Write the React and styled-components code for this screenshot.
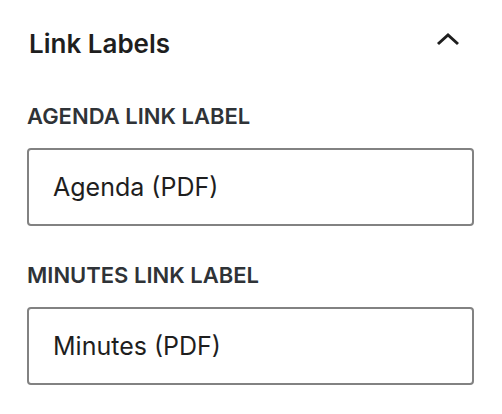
import styled, { createGlobalStyle } from "styled-components";

const Global = createGlobalStyle`
  body {
    margin: 0;
    background: #fff;
    font-family: Inter, "Noto Sans", sans-serif;
  }
`;

const Panel = styled.div`
  width: 502px;
  padding: 28px 28px 0 27px;
  box-sizing: border-box;
`;

const Header = styled.div`
  display: flex;
  align-items: flex-start;
  justify-content: space-between;
  height: 32px;
  margin-bottom: 43px;
`;

const Title = styled.h2`
  margin: 0;
  padding-left: 2px;
  font-size: 26px;
  line-height: 32px;
  font-weight: 600;
  color: #1e1e1e;
`;

const Toggle = styled.button`
  border: 0;
  background: none;
  padding: 0;
  margin: 4px 14px 0 0;
  display: flex;
  color: #1e1e1e;
`;

const Field = styled.div`
  display: flex;
  flex-direction: column;
  gap: 19px;
  margin-bottom: 36px;
`;

const Label = styled.label`
  font-size: 22px;
  line-height: 26px;
  font-weight: 600;
  text-transform: uppercase;
  color: #2f3337;
`;

const Input = styled.input`
  height: 78px;
  box-sizing: border-box;
  border: 2px solid #828282;
  border-radius: 4px;
  padding: 0 24px;
  font-family: inherit;
  font-size: 25px;
  color: #1e1e1e;
  outline: none;
`;

function Chevron() {
  return (
    <svg width="24" height="14" viewBox="0 0 24 14" fill="none">
      <path d="M2 12L12 3L22 12" stroke="currentColor" strokeWidth="3" />
    </svg>
  );
}

export default function App() {
  return (
    <>
      <Global />
      <Panel>
        <Header>
          <Title>Link Labels</Title>
          <Toggle aria-label="Collapse">
            <Chevron />
          </Toggle>
        </Header>
        <Field>
          <Label>Agenda link label</Label>
          <Input defaultValue="Agenda (PDF)" />
        </Field>
        <Field>
          <Label>Minutes link label</Label>
          <Input defaultValue="Minutes (PDF)" />
        </Field>
      </Panel>
    </>
  );
}
